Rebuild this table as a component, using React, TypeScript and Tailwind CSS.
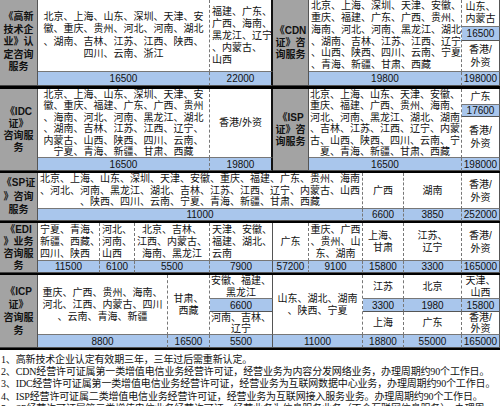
import React from "react";

const Cell = (props: any) => {
  const { c = "", lines = [], kind = "t", left, r = "n", lh } = props
  const bg = kind === "l" ? "bg-[#a3a3a3] font-bold border-b-[#444]" : kind === "p" ? "bg-[#a9c6ec] border-b-[#555]" : "bg-white border-b-[#777]"
  const lead = lh ?? (kind === "l" ? "leading-[12.5px]" : kind === "p" ? "leading-[11px]" : "leading-[12px]")
  const rb = r === "d" ? "[border-right:1px_dashed_#777]" : r === "k" ? "[border-right:2px_solid_#111]" : "border-r border-r-[#555]"
  return (
    <div className={`flex flex-col justify-center overflow-hidden border-b text-[10px] ${left ? "items-start pl-[2px]" : "items-center text-center"} ${bg} ${lead} ${rb} ${c}`}>
      {lines.map((l: string, i: number) => <div key={i} className="whitespace-nowrap">{l}</div>)}
    </div>
  )
}

const cols = "grid grid-cols-[38px_62px_35px_33px_42px_63px_36px_54px_41px_58px_38px]"

export default function App() {
  return (
    <div className="w-[500px] h-[406px] overflow-hidden bg-white text-[#111] font-['Liberation_Sans','Noto_Sans_CJK_SC',sans-serif]">
      {/* 高新 / CDN */}
      <div className={`${cols} grid-rows-[27px_14px_31px_14px] border-b-[3px] border-b-black`}>
        <Cell kind="l" c="col-start-1 row-start-1 row-span-4" lines={["《高新", "技术企", "业》认", "定咨询", "服务"]} />
        <Cell c="col-start-2 col-span-4 row-start-1 row-span-3" r="d" lh="leading-[12.5px]" lines={["北京、上海、山东、深圳、天津、安", "徽、重庆、贵州、河北、河南、湖北", "、湖南、吉林、江苏、江西、陕西、", "四川、云南、浙江"]} />
        <Cell c="col-start-6 row-start-1 row-span-3" left r="k" lines={["福建、广东、", "广西、海南、", "黑龙江、辽宁", "、内蒙古、", "山西"]} />
        <Cell kind="p" c="col-start-2 col-span-4 row-start-4" r="d" lines={["16500"]} />
        <Cell kind="p" c="col-start-6 row-start-4" r="k" lines={["22000"]} />
        <Cell kind="l" c="col-start-7 row-start-1 row-span-4" lh="leading-[12px]" lines={["《CDN", "证》咨", "询服务"]} />
        <Cell c="col-start-8 col-span-3 row-start-1 row-span-3" left r="d" lh="leading-[11.7px]" lines={["北京、上海、深圳、天津、安徽、", "重庆、福建、广东、广西、贵州、", "海南、河北、河南、黑龙江、湖北", "、湖南、吉林、江苏、江西、辽宁", "、山西、陕西、四川、云南、宁夏", "、青海、新疆、甘肃、西藏"]} />
        <Cell c="col-start-11 row-start-1" lh="leading-[12px]" lines={["山东、", "内蒙古"]} />
        <Cell kind="p" c="col-start-11 row-start-2" lines={["16500"]} />
        <Cell c="col-start-11 row-start-3" lh="leading-[13px]" lines={["香港/", "外资"]} />
        <Cell kind="p" c="col-start-8 col-span-3 row-start-4" r="d" lines={["19800"]} />
        <Cell kind="p" c="col-start-11 row-start-4" lines={["198000"]} />
      </div>

      {/* IDC / ISP */}
      <div className={`${cols} grid-rows-[16px_12px_41px_13px] border-b-2 border-b-black`}>
        <Cell kind="l" c="col-start-1 row-start-1 row-span-4" lh="leading-[12px]" lines={["《IDC", "证》", "咨询服", "务"]} />
        <Cell c="col-start-2 col-span-4 row-start-1 row-span-3" r="d" lh="leading-[11.5px]" lines={["北京、上海、山东、深圳、天津、安", "徽、重庆、福建、广东、广西、贵州", "、海南、河北、河南、黑龙江、湖北", "、湖南、吉林、江苏、江西、辽宁、", "内蒙古、山西、陕西、四川、云南、", "宁夏、青海、新疆、甘肃、西藏"]} />
        <Cell c="col-start-6 row-start-1 row-span-3" r="k" lines={["香港/外资"]} />
        <Cell kind="p" c="col-start-2 col-span-4 row-start-4" r="d" lines={["16500"]} />
        <Cell kind="p" c="col-start-6 row-start-4" r="k" lines={["19800"]} />
        <Cell kind="l" c="col-start-7 row-start-1 row-span-4" lh="leading-[12px]" lines={["《ISP", "证》咨", "询服务"]} />
        <Cell c="col-start-8 col-span-3 row-start-1 row-span-3" r="d" lh="leading-[11.5px]" lines={["北京、上海、山东、天津、安徽、", "重庆、福建、广西、贵州、海南、", "河北、河南、黑龙江、湖北、湖南", "、吉林、江苏、江西、辽宁、内蒙", "古、山西、陕西、四川、云南、宁", "夏、青海、新疆、甘肃、西藏"]} />
        <Cell c="col-start-11 row-start-1" lines={["广东"]} />
        <Cell kind="p" c="col-start-11 row-start-2" lines={["17600"]} />
        <Cell c="col-start-11 row-start-3" lh="leading-[13px]" lines={["香港/", "外资"]} />
        <Cell kind="p" c="col-start-8 col-span-3 row-start-4" r="d" lines={["16500"]} />
        <Cell kind="p" c="col-start-11 row-start-4" lines={["198000"]} />
      </div>

      {/* SP */}
      <div className={`${cols} grid-rows-[36px_12px] border-b-2 border-b-black`}>
        <Cell kind="l" c="col-start-1 row-start-1 row-span-2" lh="leading-[13.5px]" lines={["《SP证", "》咨询", "服务"]} />
        <Cell c="col-start-2 col-span-7 row-start-1" r="d" lh="leading-[11.5px]" lines={["北京、上海、山东、深圳、天津、安徽、重庆、福建、广东、贵州、海南", "、河北、河南、黑龙江、湖北、吉林、江苏、江西、辽宁、内蒙古、山西", "、陕西、四川、云南、宁夏、青海、新疆、甘肃、西藏"]} />
        <Cell c="col-start-9 row-start-1" r="d" lines={["广西"]} />
        <Cell c="col-start-10 row-start-1" r="d" lines={["湖南"]} />
        <Cell c="col-start-11 row-start-1" lh="leading-[13px]" lines={["香港/", "外资"]} />
        <Cell kind="p" c="col-start-2 col-span-7 row-start-2" r="d" lines={["11000"]} />
        <Cell kind="p" c="col-start-9 row-start-2" r="d" lines={["6600"]} />
        <Cell kind="p" c="col-start-10 row-start-2" r="d" lines={["3850"]} />
        <Cell kind="p" c="col-start-11 row-start-2" lines={["252000"]} />
      </div>

      {/* EDI */}
      <div className={`${cols} grid-rows-[38px_12px] border-b-2 border-b-black`}>
        <Cell kind="l" c="col-start-1 row-start-1 row-span-2" lh="leading-[12px]" lines={["《EDI", "》业务", "咨询服", "务"]} />
        <Cell c="col-start-2 row-start-1" left r="d" lines={["宁夏、青海、", "新疆、西藏、", "四川、陕西"]} />
        <Cell c="col-start-3 row-start-1" left r="d" lines={["河北、", "河南、", "山西"]} />
        <Cell c="col-start-4 col-span-2 row-start-1" r="d" lines={["北京、吉林、", "江西、内蒙古、", "海南、黑龙江"]} />
        <Cell c="col-start-6 row-start-1" left lines={["天津、安徽、", "福建、湖北、", "云南"]} />
        <Cell c="col-start-7 row-start-1" r="d" lines={["广东"]} />
        <Cell c="col-start-8 row-start-1" r="d" lines={["重庆、广西", "、贵州、山", "东、湖南"]} />
        <Cell c="col-start-9 row-start-1" r="d" lines={["上海、", "甘肃"]} />
        <Cell c="col-start-10 row-start-1" r="d" lines={["江苏、", "辽宁"]} />
        <Cell c="col-start-11 row-start-1" lh="leading-[13px]" lines={["香港/", "外资"]} />
        <Cell kind="p" c="col-start-2 row-start-2" r="d" lines={["11500"]} />
        <Cell kind="p" c="col-start-3 row-start-2" r="d" lines={["6100"]} />
        <Cell kind="p" c="col-start-4 col-span-2 row-start-2" r="d" lines={["5500"]} />
        <Cell kind="p" c="col-start-6 row-start-2" lines={["7900"]} />
        <Cell kind="p" c="col-start-7 row-start-2" r="d" lines={["57200"]} />
        <Cell kind="p" c="col-start-8 row-start-2" r="d" lines={["9100"]} />
        <Cell kind="p" c="col-start-9 row-start-2" r="d" lines={["15800"]} />
        <Cell kind="p" c="col-start-10 row-start-2" r="d" lines={["3300"]} />
        <Cell kind="p" c="col-start-11 row-start-2" lines={["165000"]} />
      </div>

      {/* ICP */}
      <div className={`${cols} grid-rows-[24px_13px_23px_13px] border-b-2 border-b-black`}>
        <Cell kind="l" c="col-start-1 row-start-1 row-span-4" lh="leading-[13px]" lines={["《ICP", "证》", "咨询服", "务"]} />
        <Cell c="col-start-2 col-span-3 row-start-1 row-span-3" r="d" lines={["重庆、广西、贵州、海南、", "河北、江西、内蒙古、四川", "、云南、青海、新疆"]} />
        <Cell c="col-start-5 row-start-1 row-span-3" r="d" lines={["甘肃、", "西藏"]} />
        <Cell c="col-start-6 row-start-1" lh="leading-[11.5px]" lines={["安徽、福建、", "黑龙江"]} />
        <Cell kind="p" c="col-start-6 row-start-2" lines={["6600"]} />
        <Cell c="col-start-6 row-start-3" lh="leading-[11px]" lines={["河南、吉林、", "辽宁"]} />
        <Cell c="col-start-7 col-span-2 row-start-1 row-span-3" r="d" lines={["山东、湖北、湖南", "、陕西、宁夏"]} />
        <Cell c="col-start-9 row-start-1" r="d" lines={["江苏"]} />
        <Cell kind="p" c="col-start-9 row-start-2" r="d" lines={["3300"]} />
        <Cell c="col-start-9 row-start-3" r="d" lines={["上海"]} />
        <Cell c="col-start-10 row-start-1" r="d" lines={["北京"]} />
        <Cell kind="p" c="col-start-10 row-start-2" r="d" lines={["1980"]} />
        <Cell c="col-start-10 row-start-3" r="d" lines={["广东"]} />
        <Cell c="col-start-11 row-start-1" lh="leading-[11.5px]" lines={["天津、", "山西"]} />
        <Cell kind="p" c="col-start-11 row-start-2" lines={["15800"]} />
        <Cell c="col-start-11 row-start-3" lh="leading-[11px]" lines={["香港/", "外资"]} />
        <Cell kind="p" c="col-start-2 col-span-3 row-start-4" r="d" lines={["8800"]} />
        <Cell kind="p" c="col-start-5 row-start-4" r="d" lines={["16500"]} />
        <Cell kind="p" c="col-start-6 row-start-4" lines={["5500"]} />
        <Cell kind="p" c="col-start-7 col-span-2 row-start-4" r="d" lines={["11000"]} />
        <Cell kind="p" c="col-start-9 row-start-4" r="d" lines={["18800"]} />
        <Cell kind="p" c="col-start-10 row-start-4" r="d" lines={["55000"]} />
        <Cell kind="p" c="col-start-11 row-start-4" lines={["165000"]} />
      </div>

      {/* notes */}
      <div className="pt-[4px] pl-[1px] text-[10px] leading-[12.2px] tracking-[-0.15px] font-['Liberation_Serif','Noto_Sans_CJK_SC',serif] whitespace-nowrap">
        <div>1、高新技术企业认定有效期三年，三年过后需重新认定。</div>
        <div>2、CDN经营许可证属第一类增值电信业务经营许可证，经营业务为内容分发网络业务，办理周期约90个工作日。</div>
        <div>3、IDC经营许可证属第一类增值电信业务经营许可证，经营业务为互联网数据中心业务，办理周期约90个工作日。</div>
        <div>4、ISP经营许可证属二类增值电信业务经营许可证，经营业务为互联网接入服务业务。办理周期约90个工作日。</div>
        <div>5、SP经营许可证属第二类增值电信业务经营许可证，经营业务为信息服务业务（不含互联网信息服务），办理周</div>
      </div>
    </div>
  )
}
